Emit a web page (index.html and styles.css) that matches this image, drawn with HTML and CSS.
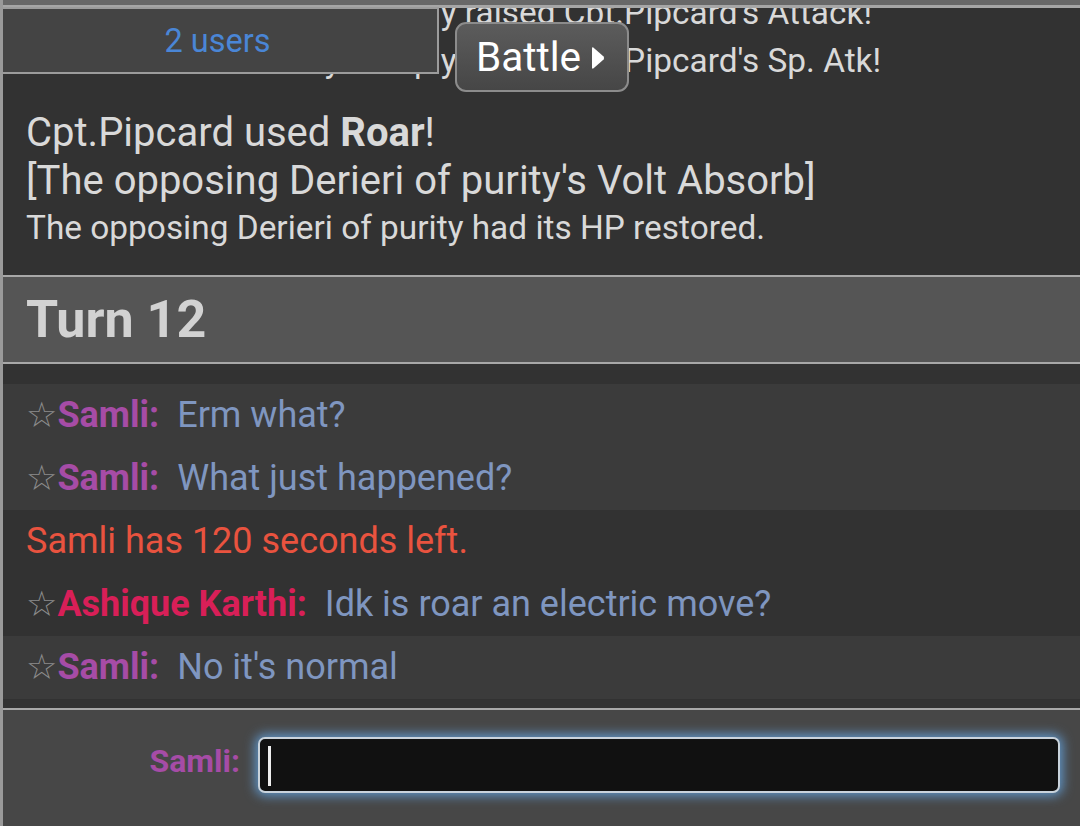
FILE: index.html
```html
<!DOCTYPE html>
<html lang="en">
<head>
    <meta charset="UTF-8">
    <meta name="viewport" content="width=device-width, initial-scale=1.0">
    <title>Battle Room</title>
    <link rel="stylesheet" href="styles.css">
</head>
<body>
    <div class="battle-room">
        <div class="room-header"></div>

        <!-- Overlays on top of the log -->
        <div class="userlist">2 users</div>
        <button class="battle-btn">
            Battle
            <svg class="battle-arrow" width="14" height="24" viewBox="0 0 14 24"><path d="M1 2.5 Q1 0.6 2.6 1.8 L12.6 10.6 Q13.6 12 12.6 13.4 L2.6 22.2 Q1 23.4 1 21.5 Z" fill="#fff"/></svg>
        </button>

        <div class="battle-log">
            <div class="log-scroll">
                <div class="log-line small">The Weakness Policy sharply raised Cpt.Pipcard's Attack!</div>
                <div class="log-line small">The Weakness Policy sharply raised Cpt.Pipcard's Sp. Atk!</div>

                <div class="log-move">
                    <div class="log-line">Cpt.Pipcard used <strong>Roar</strong>!</div>
                    <div class="log-line">[The opposing Derieri of purity's Volt Absorb]</div>
                    <div class="log-line small">The opposing Derieri of purity had its HP restored.</div>
                </div>
            </div>
        </div>

        <div class="turn-bar">Turn 12</div>

        <div class="chat-list">
            <div class="chat-row light"><span class="star">☆</span><strong class="user samli">Samli:</strong><span class="msg">Erm what?</span></div>
            <div class="chat-row light"><span class="star">☆</span><strong class="user samli">Samli:</strong><span class="msg">What just happened?</span></div>
            <div class="chat-row timer">Samli has 120 seconds left.</div>
            <div class="chat-row"><span class="star">☆</span><strong class="user ashique">Ashique Karthi:</strong><span class="msg">Idk is roar an electric move?</span></div>
            <div class="chat-row light"><span class="star">☆</span><strong class="user samli">Samli:</strong><span class="msg">No it's normal</span></div>
        </div>

        <div class="chat-form">
            <label class="chat-label">Samli:</label>
            <div class="chat-input"><span class="caret"></span></div>
        </div>
    </div>
</body>
</html>
```

FILE: styles.css
```css
/* Global Styles */
* {
    margin: 0;
    padding: 0;
    box-sizing: border-box;
}

body {
    background-color: #323232;
    color: #d9d9d9;
    font-family: Roboto, 'Liberation Sans', sans-serif;
}

.battle-room {
    position: relative;
    height: 826px;
    overflow: hidden;
    border-left: 3px solid #9a9a9a;
}

.room-header {
    height: 8px;
    background-color: #686868;
    border-bottom: 3px solid #a6a6a6;
}

/* Overlays */
.userlist {
    position: absolute;
    top: 7px;
    left: -3px;
    width: 439px;
    height: 67px;
    display: flex;
    align-items: center;
    justify-content: center;
    padding-right: 4px;
    background-color: #444;
    border: 2px solid #9c9c9c;
    color: #4a86d6;
    font-size: 32.5px;
    z-index: 2;
}

.battle-btn {
    position: absolute;
    top: 22px;
    left: 452px;
    width: 174px;
    height: 70px;
    display: flex;
    align-items: center;
    gap: 10px;
    padding-left: 19px;
    background: linear-gradient(#5c5c5c, #464646);
    border: 2px solid #8c8c8c;
    border-radius: 11px;
    color: #fff;
    font-family: Roboto, sans-serif;
    font-size: 40.5px;
    z-index: 2;
}

.battle-arrow {
    flex-shrink: 0;
    margin-top: 1px;
}

/* Battle Log */
.battle-log {
    height: 267px;
    overflow: hidden;
    padding: 0 23px;
}

.log-scroll {
    margin-top: -19px;
}

.log-line {
    font-size: 40px;
    line-height: 48px;
    white-space: nowrap;
}

.log-line.small {
    font-size: 33.4px;
    line-height: 48px;
}

.log-move {
    margin-top: 24px;
}

.log-move .log-line.small {
    line-height: 46px;
}

/* Turn Header */
.turn-bar {
    height: 89px;
    padding-left: 23px;
    background-color: #555;
    border-top: 2px solid #a8a8a8;
    border-bottom: 2px solid #a8a8a8;
    color: #d2d2d2;
    font-size: 52px;
    font-weight: 700;
    line-height: 85px;
}

/* Chat */
.chat-list {
    padding: 20px 0 9px;
}

.chat-row {
    height: 63px;
    padding-left: 23px;
    font-size: 36px;
    line-height: 63px;
    white-space: nowrap;
}

.chat-row.light {
    background-color: #3b3b3b;
}

.star {
    font-family: 'DejaVu Sans', sans-serif;
    font-size: 35px;
    color: #8c8c8c;
}

.user {
    margin-right: 18px;
}

.user.samli {
    color: #a64ca6;
}

.user.ashique {
    color: #d81f58;
}

.msg {
    color: #7f96c0;
}

.chat-row.timer {
    color: #e9533f;
}

/* Chat Form */
.chat-form {
    height: 120px;
    display: flex;
    align-items: flex-start;
    gap: 18px;
    padding: 27px 20px 0 0;
    background-color: #474747;
    border-top: 2px solid #a8a8a8;
}

.chat-label {
    width: 237px;
    height: 56px;
    display: flex;
    align-items: center;
    justify-content: flex-end;
    padding-bottom: 8px;
    color: #a64ca6;
    font-size: 32px;
    font-weight: 700;
}

.chat-input {
    flex: 1;
    height: 56px;
    padding: 7px 8px;
    background-color: #111;
    border: 2px solid #c9d3dc;
    border-radius: 7px;
    box-shadow: 0 0 11px 3px #5f93c4;
}

.caret {
    display: block;
    width: 3px;
    height: 40px;
    background-color: #eee;
}
```
